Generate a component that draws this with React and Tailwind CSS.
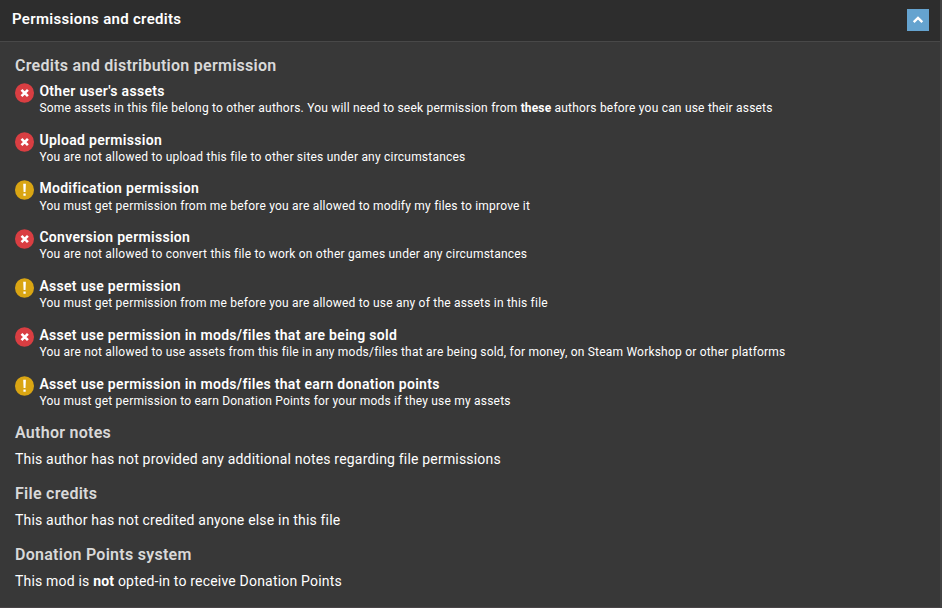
const items = [
  { type: 'no', title: "Other user's assets", text: (<>Some assets in this file belong to other authors. You will need to seek permission from <b className="font-bold tracking-[0.14px]">these</b> authors before you can use their assets</>) },
  { type: 'no', title: 'Upload permission', text: 'You are not allowed to upload this file to other sites under any circumstances' },
  { type: 'warn', title: 'Modification permission', text: 'You must get permission from me before you are allowed to modify my files to improve it' },
  { type: 'no', title: 'Conversion permission', text: 'You are not allowed to convert this file to work on other games under any circumstances' },
  { type: 'warn', title: 'Asset use permission', text: 'You must get permission from me before you are allowed to use any of the assets in this file' },
  { type: 'no', title: 'Asset use permission in mods/files that are being sold', text: 'You are not allowed to use assets from this file in any mods/files that are being sold, for money, on Steam Workshop or other platforms' },
  { type: 'warn', title: 'Asset use permission in mods/files that earn donation points', text: 'You must get permission to earn Donation Points for your mods if they use my assets' },
];

function StatusIcon({ type }) {
  return (
    <svg className="mt-[1.8px] h-5 w-[19px] shrink-0" viewBox="0 0 19 20">
      <ellipse cx="9.5" cy="10" rx="9.5" ry="9.8" fill={type === 'no' ? '#d93e42' : '#d9a513'} />
      {type === 'no' ? (
        <path d="M6.5 6.8l6.4 6.4M12.9 6.8l-6.4 6.4" stroke="#fff" strokeWidth="2.6" />
      ) : (
        <path d="M8.2 3.8h2.7l-.4 8.2H8.6zM8.4 13.5h2.3v2.3H8.4z" fill="#fff" />
      )}
    </svg>
  );
}

function Section({ title, children }) {
  return (
    <section className="h-[61px]">
      <h3 className="text-[16px] leading-6 font-semibold tracking-[0.27px] text-[#d9d9d9]">{title}</h3>
      <p className="mt-[2px] text-[14px] leading-6 tracking-[0.19px]">{children}</p>
    </section>
  );
}

export default function App() {
  return (
    <div className="h-[608px] w-[942px] overflow-hidden border-r-2 border-b border-r-[#424242] border-b-[#484446] bg-[#383838] font-['Roboto',sans-serif] text-white">
      <header className="flex h-[42px] items-start justify-between border-b border-[#484848] bg-[#2d2d2d] pt-[9px] pr-[11px] pl-3">
        <h2 className="text-[15px] leading-5 font-semibold tracking-[0.3px]">Permissions and credits</h2>
        <button className="flex h-[22px] w-[22px] items-center justify-center bg-[#65a3cf]" aria-label="Collapse">
          <svg className="h-3 w-3" viewBox="0 0 12 12">
            <path d="M1.7 8.2L6 4l4.3 4.2" fill="none" stroke="#fff" strokeWidth="2.4" />
          </svg>
        </button>
      </header>
      <main className="px-[15px] pt-[12px]">
        <h3 className="text-[16px] leading-6 font-semibold tracking-[0.27px] text-[#d9d9d9]">Credits and distribution permission</h3>
        <ul className="h-[343px] pt-[3px]">
          {items.map((item) => (
            <li key={item.title} className="flex h-[48.8px] gap-[5.4px]">
              <StatusIcon type={item.type} />
              <div className="whitespace-nowrap">
                <h4 className="-mt-[0.2px] mb-[0.2px] text-[14px] leading-5 font-semibold tracking-[0.3px]">{item.title}</h4>
                <p className="text-[12px] leading-[14px] tracking-[0.21px]">{item.text}</p>
              </div>
            </li>
          ))}
        </ul>
        <Section title="Author notes">This author has not provided any additional notes regarding file permissions</Section>
        <Section title="File credits">This author has not credited anyone else in this file</Section>
        <Section title="Donation Points system">This mod is <b className="font-bold">not</b> opted-in to receive Donation Points</Section>
      </main>
    </div>
  );
}
